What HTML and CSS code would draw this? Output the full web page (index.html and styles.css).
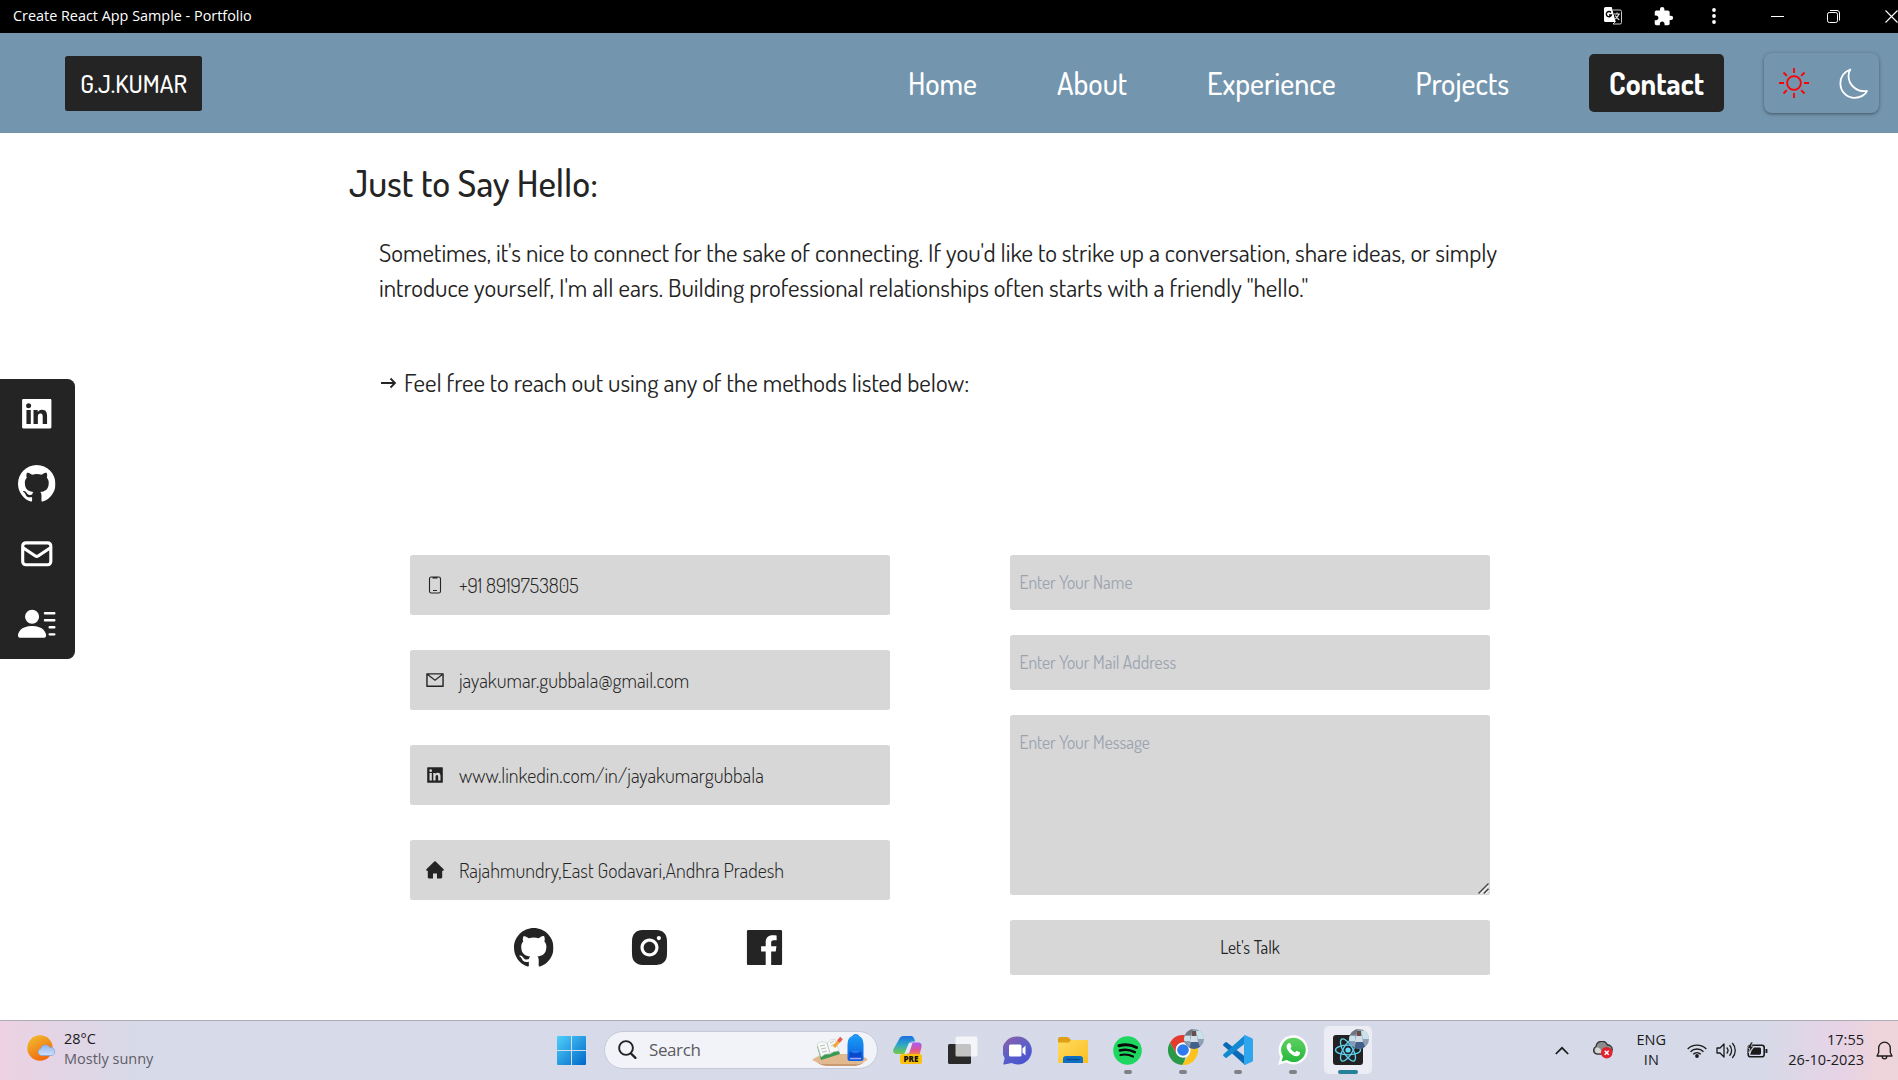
FILE: index.html
```html
<!DOCTYPE html>
<html lang="en">
<head>
<meta charset="utf-8">
<title>Portfolio</title>
<link rel="stylesheet" href="styles.css">
</head>
<body>
<svg width="0" height="0" class="defs" aria-hidden="true">
  <defs>
    <symbol id="github" viewBox="0 0 16 16"><path d="M8 0C3.58 0 0 3.58 0 8c0 3.54 2.29 6.53 5.47 7.59.4.07.55-.17.55-.38 0-.19-.01-.82-.01-1.49-2.01.37-2.53-.49-2.69-.94-.09-.23-.48-.94-.82-1.13-.28-.15-.68-.52-.01-.53.63-.01 1.08.58 1.23.82.72 1.21 1.87.87 2.33.66.07-.52.28-.87.51-1.07-1.78-.2-3.64-.89-3.64-3.95 0-.87.31-1.59.82-2.15-.08-.2-.36-1.02.08-2.12 0 0 .67-.21 2.2.82.64-.18 1.32-.27 2-.27s1.36.09 2 .27c1.53-1.04 2.2-.82 2.2-.82.44 1.1.16 1.92.08 2.12.51.56.82 1.27.82 2.15 0 3.07-1.87 3.75-3.65 3.95.29.25.54.73.54 1.48 0 1.07-.01 1.93-.01 2.2 0 .21.15.46.55.38A8.01 8.01 0 0 0 16 8c0-4.42-3.58-8-8-8"/></symbol>
    <symbol id="linkedin" viewBox="0 0 1024 1024"><path d="M880 112H144c-17.7 0-32 14.3-32 32v736c0 17.7 14.3 32 32 32h736c17.7 0 32-14.3 32-32V144c0-17.7-14.3-32-32-32zM349.3 793.7H230.6V411.9h118.7v381.8zm-59.3-434a68.8 68.8 0 1 1 68.8-68.8c-.1 38-30.9 68.8-68.8 68.8zm503.7 434H675.1V608c0-44.3-.8-101.2-61.7-101.2-61.7 0-71.2 48.2-71.2 98v188.9H423.6V411.9h113.8v52.2h1.6c15.8-30 54.5-61.7 112.3-61.7 120.2 0 142.3 79.1 142.3 182v209.3z"/></symbol>
    <clipPath id="round"><circle cx="10" cy="10" r="10"/></clipPath>
    <symbol id="avatar" viewBox="0 0 20 20"><g clip-path="url(#round)"><path fill="#8ea0b4" d="M0 0h20v20H0z"/><path fill="#6f7680" d="M0 0h9l-2 6H0z"/><path fill="#c9e2ea" d="M12 2h8v8h-6zM0 7h6v5H0z"/><path fill="#6b4d48" d="M8 2h4v5H8z"/><path fill="#d3dde8" d="M7 7h6l1 6H6z"/><path fill="#42608a" d="M7 13h7l3 7H5z"/><path fill="#7f9cb9" d="M0 13h5l-1 7H0z"/></g></symbol>
    <linearGradient id="win" x2="1" y2="1"><stop stop-color="#4fd0fb"/><stop offset="1" stop-color="#0067c8"/></linearGradient>
    <linearGradient id="sun" x2=".6" y2="1"><stop stop-color="#f0c330"/><stop offset="1" stop-color="#f2660c"/></linearGradient>
    <linearGradient id="cloud" x2="0" y2="1"><stop stop-color="#8fb6f0"/><stop offset="1" stop-color="#cfe0fa"/></linearGradient>
    <linearGradient id="chat" x2=".6" y2="1"><stop stop-color="#9160a8"/><stop offset=".6" stop-color="#5b5fc7"/><stop offset="1" stop-color="#4a54cf"/></linearGradient>
    <linearGradient id="folder" x2="1" y2="1"><stop stop-color="#ffdb62"/><stop offset="1" stop-color="#fbbf1e"/></linearGradient>
    <linearGradient id="wa" x2="0" y2="1"><stop stop-color="#5fd062"/><stop offset="1" stop-color="#26b83c"/></linearGradient>
    <linearGradient id="cpA" x2="0" y2="1"><stop stop-color="#1c6fe0"/><stop offset=".5" stop-color="#2fa8c8"/><stop offset="1" stop-color="#7ac943"/></linearGradient>
    <linearGradient id="cpB" x2="0" y2="1"><stop stop-color="#a35cf0"/><stop offset=".6" stop-color="#e0559a"/><stop offset="1" stop-color="#f58a3a"/></linearGradient>
    <linearGradient id="bag" x2="0" y2="1"><stop stop-color="#1b9cf4"/><stop offset="1" stop-color="#0a5fe0"/></linearGradient>
  </defs>
</svg>

<div class="titlebar">
  <span class="titlebar-text">Create React App Sample - Portfolio</span>
  <div class="titlebar-icons">
    <svg class="ti-translate" width="18" height="18" viewBox="0 0 18 18"><path fill="#fff" d="M1.5 0h6.2l4 15H1.5A1.5 1.5 0 0 1 0 13.5v-12A1.5 1.5 0 0 1 1.500 0z"/><path fill="none" stroke="#ccc" d="M8.500 3H16a1.500 1.500 0 0 1 1.500 1.500v11A1.500 1.500 0 0 1 16 17H9l2.500-2.500"/><path fill="none" stroke="#000" stroke-width="1.400" d="M7 5.500A2.600 2.600 0 1 0 7.400 8H5"/><path fill="none" stroke="#ddd" stroke-width="1.100" d="M10 7h6M13 5.500V7m1.800 0c-.6 2.500-2 4-3.500 5m0-3.500c.8 1.700 2 3 4 4.500"/></svg>
    <svg class="ti-puzzle" width="21" height="21" viewBox="0 0 24 24"><path fill="#fff" d="M20.500 11H19V7c0-1.100-.9-2-2-2h-4V3.500a2.500 2.500 0 0 0-5 0V5H4c-1.100 0-2 .9-2 2v3.800h1.500c1.500 0 2.700 1.200 2.700 2.700S5 16.200 3.500 16.200H2V20c0 1.100.9 2 2 2h3.800v-1.500c0-1.500 1.200-2.700 2.700-2.700s2.700 1.200 2.700 2.700V22H17c1.100 0 2-.9 2-2v-4h1.500a2.500 2.500 0 0 0 0-5z"/></svg>
    <svg class="ti-dots" width="4" height="16" viewBox="0 0 4 16"><g fill="#fff"><circle cx="2" cy="2" r="1.900"/><circle cx="2" cy="8" r="1.900"/><circle cx="2" cy="14" r="1.900"/></g></svg>
    <svg class="ti-min" width="13" height="13" viewBox="0 0 13 13"><path stroke="#fff" d="M0 6.500h13"/></svg>
    <svg class="ti-max" width="13" height="13" viewBox="0 0 13 13"><g fill="none" stroke="#fff"><rect x=".5" y="2.500" width="10" height="10" rx="1.800"/><path d="M3 .5h7a2.500 2.500 0 0 1 2.500 2.500v7.500"/></g></svg>
    <svg class="ti-close" width="13" height="13" viewBox="0 0 13 13"><path stroke="#fff" stroke-width="1.100" d="M.5.5l12 12m0-12l-12 12"/></svg>
  </div>
</div>

<header class="header">
  <a class="logo">G.J.KUMAR</a>
  <nav class="nav">
    <a>Home</a><a>About</a><a>Experience</a><a>Projects</a><a class="active">Contact</a>
  </nav>
  <div class="theme">
    <svg width="30" height="30" viewBox="-15 -15 30 30"><g fill="none" stroke="#f00" stroke-width="1.800"><circle r="6.900"/><path d="M0-15v5M0 10v5M-15 0h5M10 0h5M-10.500-10.500l3.300 3.300M7.200 7.200l3.300 3.300M10.500-10.500L7.200-7.200M-7.200 7.200l-3.300 3.300"/></g></svg>
    <svg width="30" height="31" viewBox="0 0 30 31"><path fill="none" stroke="#fff" stroke-width="1.800" stroke-linejoin="round" d="M11.300 1.500C4.500 4 1.400 9.500 1.400 15.500c0 8 6.200 14.300 14.300 14.300 5.500 0 10.800-2.800 12.300-6.800C18 24.500 9.500 17 9.500 8c0-2.500.7-4.800 1.800-6.500z"/></svg>
  </div>
</header>

<aside class="sidebar">
  <a><svg width="37.500" height="37.500"><use href="#linkedin"/></svg></a>
  <a><svg width="37.500" height="37.500"><use href="#github"/></svg></a>
  <a><svg width="37.500" height="37.500" viewBox="0 0 24 24"><path fill="none" stroke="currentColor" stroke-width="2" stroke-linecap="round" stroke-linejoin="round" d="M3 8l7.890 5.260a2 2 0 0 0 2.220 0L21 8M5 19h14a2 2 0 0 0 2-2V7a2 2 0 0 0-2-2H5a2 2 0 0 0-2 2v10a2 2 0 0 0 2 2z"/></svg></a>
  <a><svg width="37.500" height="37.500" viewBox="0 0 16 16"><path d="M6 8a3 3 0 1 0 0-6 3 3 0 0 0 0 6m-5 6s-1 0-1-1 1-4 6-4 6 3 6 4-1 1-1 1zM11 3.500a.5.5 0 0 1 .5-.5h4a.5.5 0 0 1 0 1h-4a.5.5 0 0 1-.5-.5m.5 2.500a.5.5 0 0 0 0 1h4a.5.5 0 0 0 0-1zm2 3a.5.5 0 0 0 0 1h2a.5.5 0 0 0 0-1zm0 3a.5.5 0 0 0 0 1h2a.5.5 0 0 0 0-1z"/></svg></a>
</aside>

<main class="main">
  <h1>Just to Say Hello:</h1>
  <p class="intro">Sometimes, it's nice to connect for the sake of connecting. If you'd like to strike up a conversation, share ideas, or simply introduce yourself, I'm all ears. Building professional relationships often starts with a friendly "hello."</p>
  <p class="reach"><svg width="20" height="20" viewBox="0 0 20 20"><path fill="none" stroke="#242424" stroke-width="1.800" d="M2 10h14M11.500 5.500L16 10l-4.500 4.500"/></svg>Feel free to reach out using any of the methods listed below:</p>

  <div class="columns">
    <div class="details">
      <div class="detail"><svg width="20" height="20" viewBox="0 0 20 20"><rect x="4.500" y="2" width="11" height="16" rx="1.800" fill="none" stroke="#242424" stroke-width="1.100"/><path stroke="#242424" stroke-width="1.500" d="M7.500 2.800h5"/><path stroke="#242424" d="M8 15.500h4"/></svg><span>+91 8919753805</span></div>
      <div class="detail"><svg width="20" height="20" viewBox="0 0 1024 1024"><path d="M928 160H96c-17.700 0-32 14.300-32 32v640c0 17.700 14.300 32 32 32h832c17.700 0 32-14.300 32-32V192c0-17.700-14.300-32-32-32zm-40 110.800V792H136V270.800l-27.600-21.500 39.300-50.500 42.800 33.300h643.100l42.800-33.300 39.300 50.500-27.700 21.500zM833.600 232L512 482 190.400 232l-42.800-33.300-39.300 50.500 27.600 21.500 341.600 265.600a55.990 55.990 0 0 0 68.700 0L888 270.800l27.600-21.500-39.300-50.500-42.700 33.200z"/></svg><span>jayakumar.gubbala@gmail.com</span></div>
      <div class="detail"><svg width="20" height="20"><use href="#linkedin"/></svg><span>www.linkedin.com/in/jayakumargubbala</span></div>
      <div class="detail"><svg width="20" height="20" viewBox="0 0 20 20"><path d="M9.300 1.500a1 1 0 0 1 1.400 0l7.900 7.800c.6.600.2 1.500-.6 1.500h-.8v6.400c0 .7-.5 1.200-1.200 1.200h-4v-4.800H8v4.800H4c-.7 0-1.200-.5-1.200-1.200v-6.400H2c-.8 0-1.200-.9-.6-1.500z"/></svg><span>Rajahmundry,East Godavari,Andhra Pradesh</span></div>
      <div class="social">
        <a><svg width="39.500" height="39.500"><use href="#github"/></svg></a>
        <a><svg width="45" height="45" viewBox="0 0 1024 1024"><path d="M512 378.700c-73.400 0-133.300 59.900-133.300 133.300S438.600 645.300 512 645.300 645.300 585.400 645.300 512 585.400 378.700 512 378.700zM911.800 512c0-55.200.5-109.900-2.600-165-3.100-64-17.700-120.800-64.500-167.600-46.900-46.900-103.600-61.400-167.600-64.500-55.200-3.100-109.900-2.600-165-2.600-55.200 0-109.900-.5-165 2.600-64 3.100-120.800 17.700-167.600 64.500C132.600 226.300 118.100 283 115 347c-3.100 55.200-2.600 109.900-2.600 165s-.5 109.900 2.600 165c3.100 64 17.700 120.800 64.500 167.600 46.900 46.900 103.600 61.400 167.600 64.500 55.200 3.100 109.900 2.600 165 2.600 55.200 0 109.900.5 165-2.600 64-3.100 120.800-17.700 167.600-64.500 46.900-46.900 61.400-103.600 64.500-167.600 3.200-55.100 2.600-109.800 2.600-165zM512 717.100c-113.500 0-205.100-91.600-205.100-205.100S398.500 306.900 512 306.900 717.100 398.500 717.100 512 625.500 717.100 512 717.100zm213.500-370.700c-26.500 0-47.900-21.400-47.900-47.900s21.400-47.900 47.900-47.900 47.900 21.400 47.900 47.900a47.840 47.840 0 0 1-47.900 47.900z"/></svg></a>
        <a><svg width="45" height="45" viewBox="0 0 1024 1024"><path d="M880 112H144c-17.700 0-32 14.300-32 32v736c0 17.700 14.300 32 32 32h736c17.700 0 32-14.300 32-32V144c0-17.700-14.300-32-32-32zm-92.400 233.500h-63.900c-50.100 0-59.800 23.800-59.800 58.800v77.100h119.600l-15.600 120.700h-104V912H539.200V602.200H434.900V481.400h104.300v-89c0-103.300 63.100-159.600 155.300-159.600 44.200 0 82.100 3.300 93.200 4.800v107.900z"/></svg></a>
      </div>
    </div>
    <form class="form">
      <input type="text" placeholder="Enter Your Name">
      <input type="text" placeholder="Enter Your Mail Address">
      <div class="message">
        <textarea placeholder="Enter Your Message"></textarea>
        <svg class="grip" width="11" height="11" viewBox="0 0 11 11"><path stroke="#fff" stroke-opacity=".7" stroke-width="1.200" d="M2 11.500l9-9M7 11.500l4-4"/><path stroke="#444" stroke-width="1.400" d="M.5 10.500l10-10M5.800 10.500l4.700-4.700"/></svg>
      </div>
      <button type="button">Let's Talk</button>
    </form>
  </div>
</main>

<footer class="taskbar">
  <div class="weather">
    <svg width="29" height="28" viewBox="0 0 29 28"><circle cx="13" cy="13" r="12.700" fill="url(#sun)"/><path fill="url(#cloud)" stroke="#7da2e0" stroke-width=".7" d="M14 20.500a3.600 3.600 0 0 1-.2-7 4.800 4.800 0 0 1 8.800-1.200 4.300 4.300 0 0 1 2.400 8.200z"/></svg>
    <div><div class="temp">28°C</div><div class="sky">Mostly sunny</div></div>
  </div>
  <div class="apps">
    <svg class="start" width="29" height="29" viewBox="0 0 29 29"><path fill="url(#win)" d="M1 0h13v14H0V1a1 1 0 0 1 1-1zM15 0h13a1 1 0 0 1 1 1v13H15zM0 15h14v14H1a1 1 0 0 1-1-1zM15 15h14v13a1 1 0 0 1-1 1H15z"/></svg>
    <div class="search">
      <svg width="19" height="20" viewBox="0 0 19 20"><circle cx="8" cy="8" r="6.900" fill="none" stroke="#222" stroke-width="1.900"/><path stroke="#222" stroke-width="2.300" stroke-linecap="round" d="M13 13.500l4.400 4.400"/></svg>
      <span>Search</span>
      <svg class="doodle" width="57" height="34" viewBox="0 0 57 34"><path fill="#e2b98e" d="M0 27q6-5 14-6h26q12 1 16 6-6 3-12 4H12q-7-1-12-4z"/><path fill="#c99a72" d="M4 29q5 2 10 2h28q6 0 11-2-4 3-10 4H14q-6-1-10-4z"/><path fill="#379a50" d="M5 13l4 14 19-6-1-3z"/><path fill="#f8f8f6" stroke="#c6cec8" stroke-width=".6" d="M5 11q5-4 10-1 3-4 8-4l4 12q-6 0-9 3-5-1-9 3z"/><path stroke="#9aa" stroke-width=".7" d="M15 10l3 10M8 13l5-1M9 16l5-1M10 19l5-1M18 10l4-2M19 13l4-2"/><path stroke="#f4a531" stroke-width="3" d="M22 14l5-6"/><path stroke="#ea5b4d" stroke-width="3.500" d="M26.500 8.500l3-3.500"/><path fill="none" stroke="#1677e8" stroke-width="1.500" d="M40.500 4a3.500 3.500 0 0 1 6.500 0"/><path fill="url(#bag)" d="M35.500 11q0-8.500 8-8.500t8 8.500v14.500q0 2.500-2.500 2.500H38q-2.500 0-2.500-2.500z"/><path fill="#0b49c9" d="M37.500 19q6-6 12 0v6h-12z"/><path fill="#1c7df0" d="M38 18.500q5.500-5 11 0-5.500 3.500-11 0z"/><path stroke="#a9a0ff" stroke-width="1.500" d="M38 25.500h11"/></svg>
    </div>
    <div class="app"><svg width="30" height="29" viewBox="0 0 30 29"><path fill="url(#cpA)" d="M6 3.500Q7 0 10.500 0H18q3 0 4 5.500h-3.500q-2 0-3 3L13 16q-1 2-3 2H4q-5 0-3.500-5z"/><path fill="url(#cpB)" d="M17 6.500h8q4.500 0 3.500 4.500l-2 8H12q2 0 2.500-3z"/><path fill="#dfe8f8" d="M16 7h3.500L16 17.500h-4.500z"/><rect x="7" y="18" width="22" height="10" rx="2.500" fill="#fcc10a"/><text x="18" y="26" text-anchor="middle" class="pre">PRE</text></svg></div>
    <div class="app"><svg width="30" height="29" viewBox="0 0 30 29"><rect y="8" width="23" height="20" rx="1.500" fill="#2a2a2a"/><rect x="7.500" y=".5" width="22" height="20" rx="1.500" fill="#fff" fill-opacity=".72"/></svg></div>
    <div class="app"><svg width="29" height="29" viewBox="0 0 29 29"><path fill="url(#chat)" d="M14.500.5a14 14 0 1 1-6 26.500l-7 1.500q-1.500 0-1-1.500l1.200-5A14 14 0 0 1 14.500.5z"/><rect x="6" y="8.500" width="12.500" height="12" rx="1.500" fill="#fff"/><path fill="#fff" d="M19.500 12.500l3-3v10l-3-3z"/></svg></div>
    <div class="app"><svg width="30" height="27" viewBox="0 0 30 27"><path fill="#e0a016" d="M0 2q0-2 2-2h7q1 0 2 1l2 2h15q2 0 2 2v8H0z"/><path fill="url(#folder)" d="M0 5.500h11L13 3h15.500Q30 3 30 4.500V26H1q-1 0-1-1z"/><path fill="#0f6fc0" d="M5 26v-4q0-3 3-3h14q3 0 3 3v4z"/><path stroke="#0a4a8c" stroke-width="1.300" d="M8.500 22.500h13"/></svg></div>
    <div class="app running"><svg width="29" height="29" viewBox="0 0 29 29"><circle cx="14.500" cy="14.500" r="14.300" fill="#1ed760"/><g fill="none" stroke="#0a0a0a" stroke-linecap="round"><path stroke-width="3" d="M6 9.800q9.500-2.500 17.500 1.700"/><path stroke-width="2.500" d="M6.800 14.500q8-2 15 1.700"/><path stroke-width="2.200" d="M7.500 19q6.500-1.500 12.500 1.500"/></g></svg></div>
    <div class="app running"><svg width="30" height="30" viewBox="0 0 30 30"><path fill="#e33b2e" d="M2 7.500A15 15 0 0 1 28 7.500H15a7.500 7.500 0 0 0-6.500 3.800v7.500z"/><path fill="#2a9a49" d="M2 7.500l6.500 11.200A7.500 7.500 0 0 0 15 22.500h2.500L15 30A15 15 0 0 1 2 7.500z"/><path fill="#fcc31e" d="M28 7.500A15 15 0 0 1 14 30l7.500-11.200A7.500 7.500 0 0 0 21.500 11 L15 7.500z"/><circle cx="15" cy="15" r="7.400" fill="#fff"/><circle cx="15" cy="15" r="5.800" fill="#2f7bee"/></svg><svg class="badge" width="20" height="20"><use href="#avatar"/></svg></div>
    <div class="app running"><svg width="30" height="30" viewBox="0 0 30 30"><path fill="#0a6ab6" d="M.5 9l2-1.700q.6-.4 1.200 0L22 21.500V30L.5 10.800q-.8-.9 0-1.800z"/><path fill="#1389d2" d="M.5 21l2 1.700q.6.400 1.200 0L22 8.500V0L.5 19.200q-.8.900 0 1.800z"/><path fill="#2fa5ee" d="M22 0l7 3.200q1 .5 1 1.500v20.600q0 1-1 1.500L22 30q-1-.3-1-1.500v-27Q21 .3 22 0z"/></svg></div>
    <div class="app running"><svg width="30" height="30" viewBox="0 0 30 30"><path fill="#fff" d="M15.300.2a14.600 14.600 0 1 1-7 27.400L0 30l2.400-8A14.700 14.700 0 0 1 15.300.2z"/><path fill="url(#wa)" d="M15.300 2.700A12.200 12.200 0 1 1 8.700 25l-5.200 1.500L5 21.400A12.200 12.200 0 0 1 15.300 2.700z"/><path fill="#fff" d="M10.500 8.300c.7-.6 1.500-.4 1.800.2l1.200 2.700c.2.600-.6 1.400-1 2 1 2 2.500 3.400 4.600 4.300.7-.7 1.300-1.900 2-1.600l2.600 1.300c1.200.8-.4 3.800-2.700 4C14 21.500 8.300 15 8.600 11.500c.1-1.500.9-2.400 1.900-3.200z"/></svg></div>
    <div class="app running current"><svg width="30" height="30" viewBox="-15 -15 30 30"><rect x="-15" y="-15" width="30" height="30" rx="3" fill="#222"/><circle r="2.600" fill="#61dafb"/><g fill="none" stroke="#5fd0ee" stroke-width="1.300"><ellipse rx="12.500" ry="4.800"/><ellipse rx="12.500" ry="4.800" transform="rotate(60)"/><ellipse rx="12.500" ry="4.800" transform="rotate(120)"/></g></svg><svg class="badge" width="20" height="20"><use href="#avatar"/></svg></div>
  </div>
  <div class="tray">
    <svg class="t-chev" width="14" height="9" viewBox="0 0 14 9"><path fill="none" stroke="#1b1b1b" stroke-width="1.700" d="M.8 8L7 1.800 13.200 8"/></svg>
    <svg class="t-cloud" width="21" height="18" viewBox="0 0 21 18"><path fill="#8c8c8c" stroke="#333" stroke-width="1.300" d="M4.500 13A4 4 0 0 1 4 5.500 6 6 0 0 1 15.500 4 4.500 4.500 0 0 1 16 13z"/><path fill="#d6d6d6" d="M5 12.300a3.200 3.200 0 0 1 0-6q3 0 6 6z"/><circle cx="14.700" cy="11.700" r="5.800" fill="#e02330"/><path stroke="#fff" stroke-width="1.500" d="M12.700 9.700l4 4m0-4l-4 4"/></svg>
    <div class="lang">ENG<br>IN</div>
    <svg class="t-wifi" width="20" height="15" viewBox="0 0 20 15"><circle cx="10" cy="13" r="1.900" fill="#1b1b1b"/><g fill="none" stroke="#1b1b1b" stroke-width="1.400"><path d="M.7 6a13 13 0 0 1 18.600 0"/><path d="M3.500 8.700a9.300 9.300 0 0 1 13 0"/><path d="M6.200 11.300a5.600 5.600 0 0 1 7.600 0"/></g></svg>
    <svg class="t-vol" width="21" height="17" viewBox="0 0 21 17"><g fill="none" stroke="#1b1b1b" stroke-width="1.300"><path stroke-linejoin="round" d="M1 6h3l4-4v13l-4-4H1z"/><path d="M10.700 5.500a4.500 4.500 0 0 1 0 6M13.500 3.300a7.500 7.500 0 0 1 0 10.400M16.300 1a11 11 0 0 1 0 15"/></g></svg>
    <svg class="t-bat" width="21" height="16" viewBox="0 0 21 16"><rect x="1.200" y="3.200" width="16" height="11.600" rx="2.300" fill="none" stroke="#1b1b1b" stroke-width="1.600"/><path fill="#1b1b1b" d="M18.500 7h1.900v4h-1.900zM7 5.500h6l1 1v5l-1 1.200H3.200l1.300-4z"/><path fill="#1b1b1b" stroke="#d7dae8" stroke-width=".6" d="M4.200 0L0 6.200h2.700L1.700 11 6.700 4.200H4L6 0z"/></svg>
    <div class="clock">17:55<br>26-10-2023</div>
    <svg class="t-bell" width="17" height="19" viewBox="0 0 17 19"><path fill="none" stroke="#1b1b1b" stroke-width="1.300" stroke-linejoin="round" d="M1 15l1.700-3.500V7a5.800 5.800 0 0 1 11.600 0v4.500L16 15zM6.200 15.500a2.300 2.300 0 0 0 4.600 0"/></svg>
  </div>
</footer>
</body>
</html>
```
FILE: styles.css
```css
* { box-sizing: border-box; }

body {
  margin: 0;
  height: 1080px;
  display: flex;
  flex-direction: column;
  position: relative;
  overflow: hidden;
  background: #fff;
  color: #242424;
  font-family: Dosis, "Open Sans", sans-serif;
}

svg { display: block; flex: none; fill: currentColor; }
.defs { position: absolute; }

/* Window title bar */
.titlebar {
  height: 33px;
  flex: none;
  display: flex;
  align-items: center;
  justify-content: space-between;
  padding-left: 13px;
  background: #000;
  color: #fff;
}
.titlebar-text { font: 14.4px/20px "Open Sans", sans-serif; padding-bottom: 2px; }
.titlebar-icons { display: flex; align-items: center; padding-bottom: 1px; }
.ti-translate { margin-right: 31px; }
.ti-puzzle { margin-right: 38px; }
.ti-dots { margin-right: 55px; }
.ti-min { margin-right: 43px; }
.ti-max { margin-right: 45px; }

/* Site header */
.header {
  height: 100px;
  flex: none;
  display: flex;
  align-items: center;
  padding: 0 19px 0 65px;
  background: #7395ae;
  color: #fff;
}
.logo {
  width: 137px;
  height: 55px;
  line-height: 55px;
  text-align: center;
  font-size: 25px;
  font-weight: 500;
  background: #242424;
  border-radius: 2.5px;
}
.nav {
  display: flex;
  align-items: center;
  gap: 80px;
  margin-left: auto;
  font-size: 30px;
  font-weight: 500;
  line-height: 58px;
}
.nav .active {
  padding: 0 20px;
  font-weight: 700;
  background: #242424;
  border-radius: 5px;
}
.theme {
  width: 115px;
  height: 60px;
  margin-left: 40px;
  padding: 0 10px 0 15px;
  display: flex;
  align-items: center;
  justify-content: space-between;
  border-radius: 7.5px;
  box-shadow: 0 1px 4px rgba(0, 0, 0, .25), 0 1px 2px rgba(0, 0, 0, .22);
  background: #7395ae;
}

/* Floating links */
.sidebar {
  position: absolute;
  left: 0;
  top: 379px;
  width: 75px;
  background: #242424;
  border-radius: 0 7.5px 7.5px 0;
  color: #fff;
}
.sidebar a {
  height: 70px;
  padding-left: 18px;
  display: flex;
  align-items: center;
}

/* Contact page */
.main { flex: 1; padding: 27px 0 0 349px; }
h1 { margin: 0 0 30px; font-size: 37.5px; font-weight: 500; line-height: 45px; }
.intro, .reach { font-size: 25px; font-weight: 400; line-height: 35px; }
.intro { width: 1140px; margin: 0 0 60px 30px; }
.reach { display: flex; align-items: center; gap: 5px; margin: 0 0 155px 30px; }

.columns { display: flex; gap: 120px; margin-left: 61px; }
.details, .form { width: 480px; display: flex; flex-direction: column; }
.details { gap: 35px; }
.detail {
  height: 60px;
  padding-left: 15px;
  display: flex;
  align-items: center;
  gap: 14px;
  background: #d7d7d7;
  border-radius: 2.5px;
  font-size: 20px;
  font-weight: 300;
}
.social { display: flex; justify-content: center; gap: 70px; margin: -10px 2px 0 0; }
.social a { width: 45px; height: 45px; display: flex; align-items: center; justify-content: center; }

.form { gap: 25px; }
.form input, .form textarea, .form button {
  display: block;
  width: 100%;
  height: 55px;
  margin: 0;
  padding: 15px 9.5px;
  border: 0;
  border-radius: 2.5px;
  background: #d7d7d7;
  color: #242424;
  font: 400 17.5px/25px Dosis, sans-serif;
}
.form input { padding-bottom: 16px; }
.form textarea { height: 180px; resize: none; }
.form ::placeholder { color: #9ca3af; opacity: 1; }
.message { position: relative; }
.grip { position: absolute; right: 1px; bottom: 1px; }

/* Desktop taskbar */
.taskbar {
  height: 60px;
  flex: none;
  display: flex;
  border-top: 1px solid #adadb9;
  background: linear-gradient(90deg, #ecd2e2 0, #e4d4e5 50px, #d7dae8 140px, #d6dae8 1760px, #e6d3e6 1840px, #eed4db 1880px);
  color: #1b1b1b;
  font: 14.5px/20px "Open Sans", sans-serif;
}
.weather { width: 557px; padding: 8px 0 0 27px; display: flex; gap: 8px; }
.weather svg { margin-top: 6px; }
.sky { color: #5d5d66; }
.apps { display: flex; align-items: center; padding-bottom: 1px; }
.start { margin-right: 18px; }
.search {
  width: 274px;
  height: 38px;
  margin-right: 2px;
  padding: 0 8px 0 13px;
  display: flex;
  align-items: center;
  border: 1px solid #c6c9d8;
  border-radius: 19px;
  background: #f2f3f8;
}
.search span { margin-left: 12px; font-size: 17px; letter-spacing: -.4px; color: #5b5b5f; }
.doodle { margin-left: auto; }
.app {
  position: relative;
  width: 48px;
  height: 48px;
  margin: 0 3.5px;
  display: flex;
  align-items: center;
  justify-content: center;
}
.app.running::after {
  content: "";
  position: absolute;
  bottom: 0;
  left: 20px;
  width: 8px;
  height: 4px;
  border-radius: 2px;
  background: #808087;
}
.app.current { background: #ebecf4; border-radius: 5px; }
.app.current::after { left: 14px; width: 20px; background: #26809a; }
.badge { position: absolute; left: 25px; top: 3px; }
.pre { font: 800 8px "Open Sans", sans-serif; fill: #111; }

.tray { display: flex; align-items: center; margin-left: auto; padding: 0 5px 1px 0; }
.t-chev { margin-right: 23px; }
.t-cloud { margin-right: 23px; }
.lang { width: 30px; text-align: center; margin-right: 21px; }
.t-wifi { margin-right: 9px; }
.t-vol { margin-right: 10px; }
.t-bat { margin-right: 20px; }
.clock { text-align: right; margin-right: 12px; }
```
